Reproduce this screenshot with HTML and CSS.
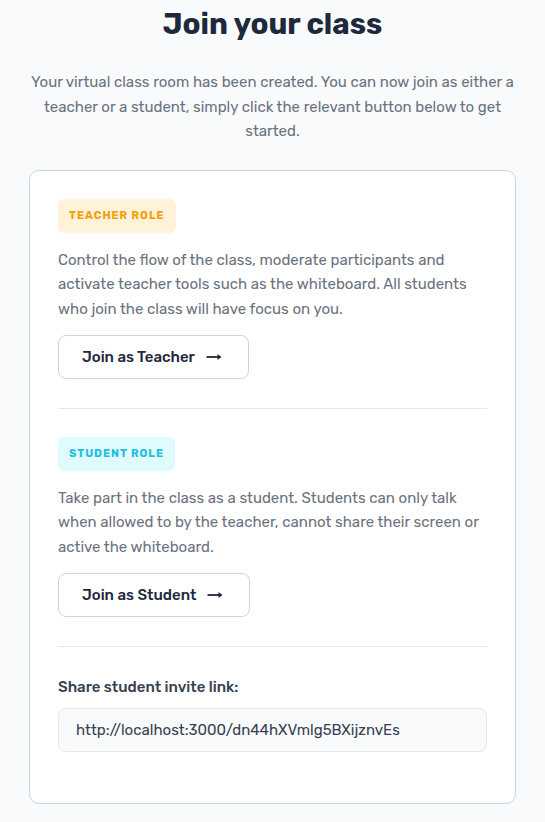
FILE: index.html
```html
<!DOCTYPE html>
<html lang="en">
<head>
<meta charset="utf-8">
<title>Join your class</title>
<link rel="stylesheet" href="styles.css">
</head>
<body>
<main class="page">
  <h1 class="title">Join your class</h1>
  <p class="intro">Your virtual class room has been created. You can now join as either a teacher or a student, simply click the relevant button below to get started.</p>
  <section class="card">
    <div class="role">
      <span class="badge badge-teacher">TEACHER ROLE</span>
      <p class="desc">Control the flow of the class, moderate participants and activate teacher tools such as the whiteboard. All students who join the class will have focus on you.</p>
      <button class="join">Join as Teacher
        <svg class="arrow" width="16" height="8" viewBox="0 0 16 8"><path d="M0.5 4H12.5" stroke="#1e293b" stroke-width="1.8"/><path d="M11.5 1L15.5 4L11.5 7Z" fill="#1e293b"/></svg>
      </button>
    </div>
    <hr class="divider">
    <div class="role">
      <span class="badge badge-student">STUDENT ROLE</span>
      <p class="desc">Take part in the class as a student. Students can only talk when allowed to by the teacher, cannot share their screen or active the whiteboard.</p>
      <button class="join">Join as Student
        <svg class="arrow" width="16" height="8" viewBox="0 0 16 8"><path d="M0.5 4H12.5" stroke="#1e293b" stroke-width="1.8"/><path d="M11.5 1L15.5 4L11.5 7Z" fill="#1e293b"/></svg>
      </button>
    </div>
    <hr class="divider">
    <div class="share">
      <label class="share-label">Share student invite link:</label>
      <div class="link-box">http://localhost:3000/dn44hXVmlg5BXijznvEs</div>
    </div>
  </section>
</main>
</body>
</html>
```
FILE: styles.css
```css
* { box-sizing: border-box; }
html, body { margin: 0; padding: 0; }
body {
  background: #f8fafc;
  font-family: Rubik, Inter, "Noto Sans", sans-serif;
  color: #1e293b;
}
.page {
  padding: 4px 29px 19px;
}
.title {
  margin: 0;
  text-align: center;
  font-size: 29.5px;
  line-height: 40px;
  font-weight: 700;
  color: #1e293b;
}
.intro {
  margin: 26px 0 0;
  text-align: center;
  font-size: 15px;
  line-height: 24.5px;
  color: #6b7280;
}
.card {
  margin-top: 26px;
  background: #fff;
  border: 1px solid #cbd5e1;
  border-radius: 10px;
  padding: 28px 28px 51px;
}
.role {
  display: flex;
  flex-direction: column;
  align-items: flex-start;
}
.badge {
  display: inline-block;
  font-size: 11px;
  font-weight: 700;
  letter-spacing: 1px;
  line-height: 34px;
  padding: 0 11px;
  border-radius: 6px;
}
.badge-teacher { background: #fef3d9; color: #f59e0b; }
.badge-student { background: #dffbfd; color: #22c0dc; }
.desc {
  margin: 15px 0 0;
  font-size: 15px;
  line-height: 24.5px;
  color: #6b7280;
}
.join {
  margin-top: 13.5px;
  display: inline-flex;
  align-items: center;
  gap: 11px;
  height: 44px;
  padding: 0 26px 0 23px;
  background: #fff;
  border: 1px solid #cbd5e1;
  border-radius: 8px;
  font-family: inherit;
  font-size: 15px;
  font-weight: 500;
  color: #1e293b;
}
.divider {
  margin: 29px 0 28px;
  border: 0;
  border-top: 1px solid #e5e7eb;
}
.share-label {
  display: block;
  font-size: 15px;
  font-weight: 500;
  line-height: 24px;
  color: #374151;
}
.link-box {
  margin-top: 9px;
  height: 44px;
  display: flex;
  align-items: center;
  padding: 0 17px;
  background: #f8fafc;
  border: 1px solid #e5e7eb;
  border-radius: 8px;
  font-size: 15px;
  color: #374151;
}
```
